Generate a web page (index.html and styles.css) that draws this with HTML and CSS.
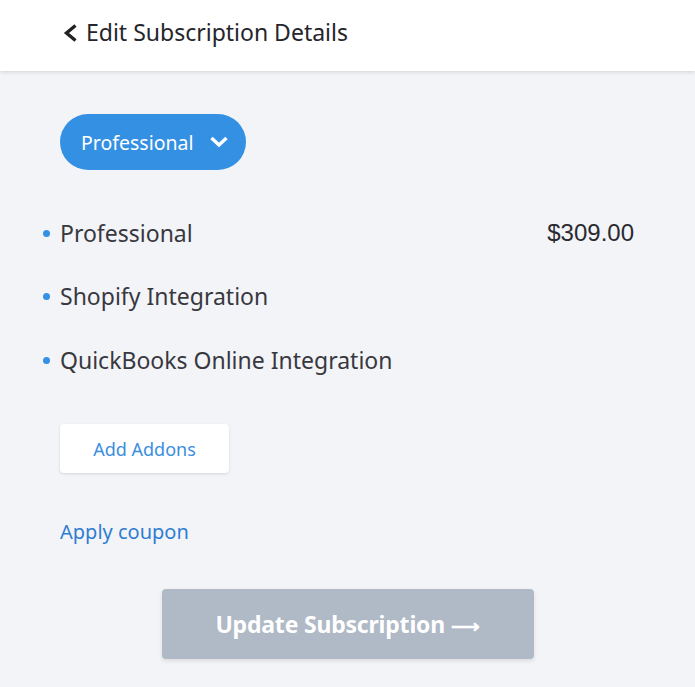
FILE: index.html
```html
<!DOCTYPE html>
<html>
<head>
<meta charset="utf-8">
<link rel="stylesheet" href="styles.css">
</head>
<body>
<header class="topbar">
  <svg class="back" width="16" height="20" viewBox="0 0 16 20"><path d="M13.5 2.5 L4.5 10 L13.5 17.5" fill="none" stroke="#222" stroke-width="3.4"/></svg>
  <span class="title">Edit Subscription Details</span>
</header>
<main class="content">
  <button class="plan-pill">
    <span>Professional</span>
    <svg width="20" height="14" viewBox="0 0 20 14"><path d="M2.5 3 L10 10 L17.5 3" fill="none" stroke="#fff" stroke-width="3.4"/></svg>
  </button>
  <ul class="items">
    <li class="item"><span class="dot"></span><span class="name">Professional</span><span class="price">$309.00</span></li>
    <li class="item"><span class="dot"></span><span class="name">Shopify Integration</span></li>
    <li class="item"><span class="dot"></span><span class="name">QuickBooks Online Integration</span></li>
  </ul>
  <button class="addons">Add Addons</button>
  <a class="coupon">Apply coupon</a>
  <div class="update-row">
    <button class="update">Update Subscription <span class="arrow">⟶</span></button>
  </div>
</main>
</body>
</html>
```
FILE: styles.css
```css
html, body {
  margin: 0;
  padding: 0;
}
body {
  background: #f3f4f8;
  font-family: "Noto Sans", "Open Sans", sans-serif;
  color: #33333a;
  width: 695px;
  height: 687px;
  overflow: hidden;
}
.topbar {
  height: 71px;
  box-sizing: border-box;
  padding-bottom: 7px;
  background: #fff;
  box-shadow: 0 1px 4px rgba(0,0,0,0.14);
  display: flex;
  align-items: center;
  padding-left: 62px;
  gap: 8px;
  position: relative;
}
.back { margin-top: 1px; }
.title {
  font-size: 23px;
  color: #25252b;
}
.content {
  padding: 43px 60px 0 60px;
}
.plan-pill {
  height: 56px;
  width: 186px;
  border: none;
  border-radius: 28px;
  background: #3490e2;
  color: #fff;
  font-family: inherit;
  font-size: 19.5px;
  display: flex;
  align-items: center;
  padding: 0 17px 0 21px;
  justify-content: space-between;
}
.items {
  list-style: none;
  margin: 32px 0 0 0;
  padding: 0;
}
.item {
  display: flex;
  align-items: center;
  height: 64px;
  font-size: 23px;
  position: relative;
}
.item:first-child { height: 62px; }
.dot {
  position: absolute;
  left: -17px;
  width: 7px;
  height: 7px;
  border-radius: 50%;
  background: #3490e2;
}
.name { flex: 1; color: #38383f; }
.price {
  font-family: "Liberation Sans", Arial, sans-serif;
  font-size: 24px;
  color: #2a2a30;
  margin-right: 1px;
}
.addons {
  margin-top: 32px;
  width: 169px;
  height: 49px;
  background: #fff;
  border: none;
  border-radius: 4px;
  box-shadow: 0 1px 3px rgba(0,0,0,0.12);
  color: #3a8ee0;
  font-family: inherit;
  font-size: 18px;
  display: block;
}
.coupon {
  display: block;
  margin-top: 45px;
  font-size: 20px;
  color: #2f7dd3;
}
.update-row {
  display: flex;
  justify-content: center;
  margin-top: 44px;
  margin-left: -60px;
  margin-right: -60px;
}
.update {
  width: 372px;
  height: 70px;
  background: #b0b9c6;
  border: none;
  border-radius: 4px;
  box-shadow: 0 2px 4px rgba(0,0,0,0.1);
  color: #fff;
  font-family: inherit;
  font-weight: 700;
  font-size: 23px;
  letter-spacing: -0.2px;
}
.arrow { font-weight: 700; font-size: 20px; }
```
